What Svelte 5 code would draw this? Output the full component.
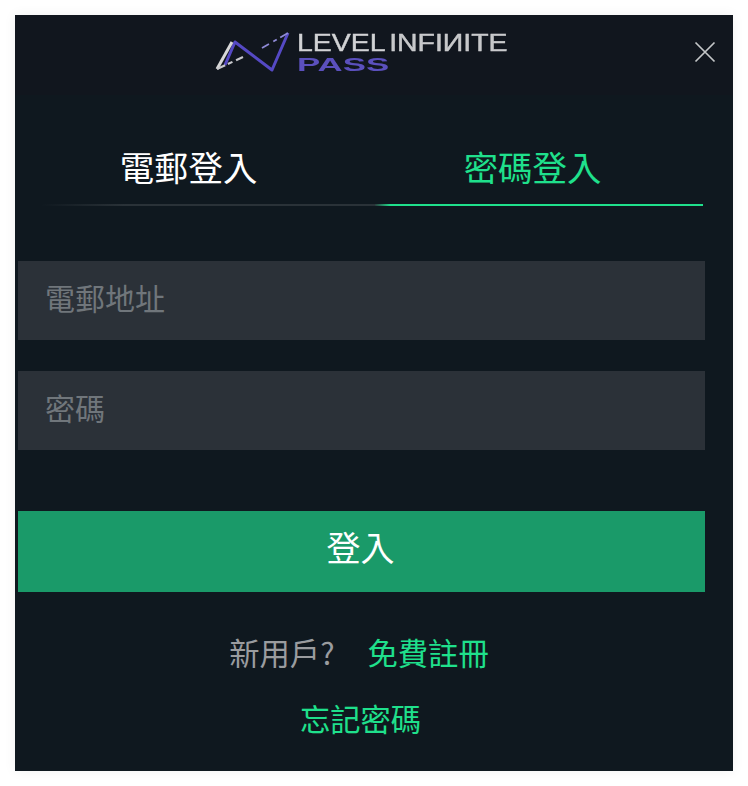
<script>
  const email = '電郵地址';
  const password = '密碼';
</script>

<div class="page">
  <div class="card">
    <header class="head">
      <div class="logo">
        <svg class="mark" viewBox="0 0 76 44" width="76" height="44" aria-hidden="true">
          <path d="M10 35 L20 12 L57 40 L73 3" fill="none" stroke="#5549c4" stroke-width="3" stroke-linejoin="round"/>
          <path d="M2 39 L17 12" fill="none" stroke="#d8d8d8" stroke-width="3"/>
          <path d="M2 39 L28 27" fill="none" stroke="#c8c8cc" stroke-width="2.2" stroke-dasharray="9 3 5 4"/>
          <path d="M73 3 L47 18" fill="none" stroke="#8f8ad6" stroke-width="1.8" stroke-dasharray="9 4 4 5"/>
        </svg>
        <div class="words">
          <div class="line1"><span class="lv">LEVEL</span><span class="thin">INFI<span class="flip">N</span>ITE</span></div>
          <div class="line2">PASS</div>
        </div>
      </div>
      <button class="close" aria-label="關閉">
        <svg viewBox="0 0 22 22" width="22" height="22"><path d="M1.5 1.5 L20.5 20.5 M20.5 1.5 L1.5 20.5" stroke="#c4c6c8" stroke-width="1.7" fill="none"/></svg>
      </button>
    </header>

    <div class="tabs">
      <div class="tab">電郵登入</div>
      <div class="tab active">密碼登入</div>
    </div>

    <form class="form" onsubmit={(e) => e.preventDefault()}>
      <input class="field" type="text" placeholder={email} />
      <input class="field" type="password" placeholder={password} />
      <button class="submit" type="submit">登入</button>
    </form>

    <div class="foot">
      <p class="signup"><span class="muted">新用戶?</span><a href="#signup">免費註冊</a></p>
      <p class="forgot"><a href="#forgot">忘記密碼</a></p>
    </div>
  </div>
</div>

<style>
  :global(body) {
    margin: 0;
    background: #fff;
  }
  .page {
    box-sizing: border-box;
    width: 748px;
    height: 786px;
    padding: 15px;
    font-family: "Noto Sans CJK TC", "Noto Sans", sans-serif;
  }
  .card {
    width: 718px;
    height: 756px;
    background: #0f181f;
    box-shadow: 0 0 12px rgba(0, 0, 0, 0.06);
    display: flex;
    flex-direction: column;
  }
  .head {
    position: relative;
    height: 80px;
    flex: none;
    background: #11161e;
    display: flex;
    justify-content: center;
  }
  .logo {
    display: flex;
    align-items: flex-start;
    gap: 6px;
    padding-top: 15px;
    margin-left: -26px;
    filter: blur(0.4px);
  }
  .words {
    width: 211px;
    font-family: "Liberation Sans", sans-serif;
    line-height: 1;
  }
  .line1 {
    font-size: 23px;
    line-height: 27px;
    height: 27px;
    color: #d2d3d5;
    -webkit-text-stroke: 0.4px #d2d3d5;
    transform: scaleX(1.235);
    transform-origin: left;
    white-space: nowrap;
  }
  .lv {
    margin-right: 3px;
  }
  .thin {
    color: #c6c7c9;
  }
  .flip {
    display: inline-block;
    transform: scaleX(-1);
  }
  .line2 {
    font-size: 19px;
    line-height: 15px;
    font-weight: 700;
    color: #5b50bd;
    transform: scaleX(1.83);
    transform-origin: left;
  }
  .close {
    position: absolute;
    top: 26px;
    right: 17px;
    width: 22px;
    height: 22px;
    padding: 0;
    border: 0;
    background: none;
    display: block;
  }
  .close svg {
    display: block;
  }
  .tabs {
    display: grid;
    grid-template-columns: 333px 328px;
    margin: 30px 0 0 27px;
  }
  .tab {
    height: 81px;
    box-sizing: border-box;
    padding-right: 40px;
    font-size: 34.4px;
    line-height: 83px;
    font-weight: 400;
    text-align: center;
    color: #fff;
    border-bottom: 2px solid transparent;
    border-image: linear-gradient(90deg, transparent, #2a3238 25%, #2a3238) 1;
  }
  .tab.active {
    color: #1fe08c;
    padding-right: 13px;
    border-image: linear-gradient(90deg, #2a3238, #1fe08c 5%) 1;
  }
  .form {
    display: flex;
    flex-direction: column;
    width: 687px;
    margin: 55px 0 0 3px;
    gap: 31px;
  }
  .field {
    box-sizing: border-box;
    width: 100%;
    height: 79px;
    border: 0;
    outline: 0;
    padding: 0 27px 8px;
    background: #2b3138;
    font: 400 30px "Noto Sans CJK TC", sans-serif;
    color: #fff;
  }
  .field::placeholder {
    color: #70767b;
    opacity: 1;
  }
  .submit {
    height: 81px;
    margin-top: 30px;
    border: 0;
    background: #1a9a69;
    color: #fff;
    font: 400 34px "Noto Sans CJK TC", sans-serif;
    padding: 0 2px 10px 0;
  }
  .foot {
    text-align: center;
    font-size: 30.3px;
    font-weight: 400;
    margin-top: 35px;
    width: 718px;
  }
  .foot p {
    margin: 0;
    line-height: 50px;
  }
  .forgot {
    margin-top: 16px !important;
    padding-right: 27px;
  }
  .signup {
    padding-right: 30px;
  }
  .muted {
    color: #9a9c9f;
    margin-right: 33px;
  }
  a {
    color: #1fe08c;
    text-decoration: none;
  }
</style>
